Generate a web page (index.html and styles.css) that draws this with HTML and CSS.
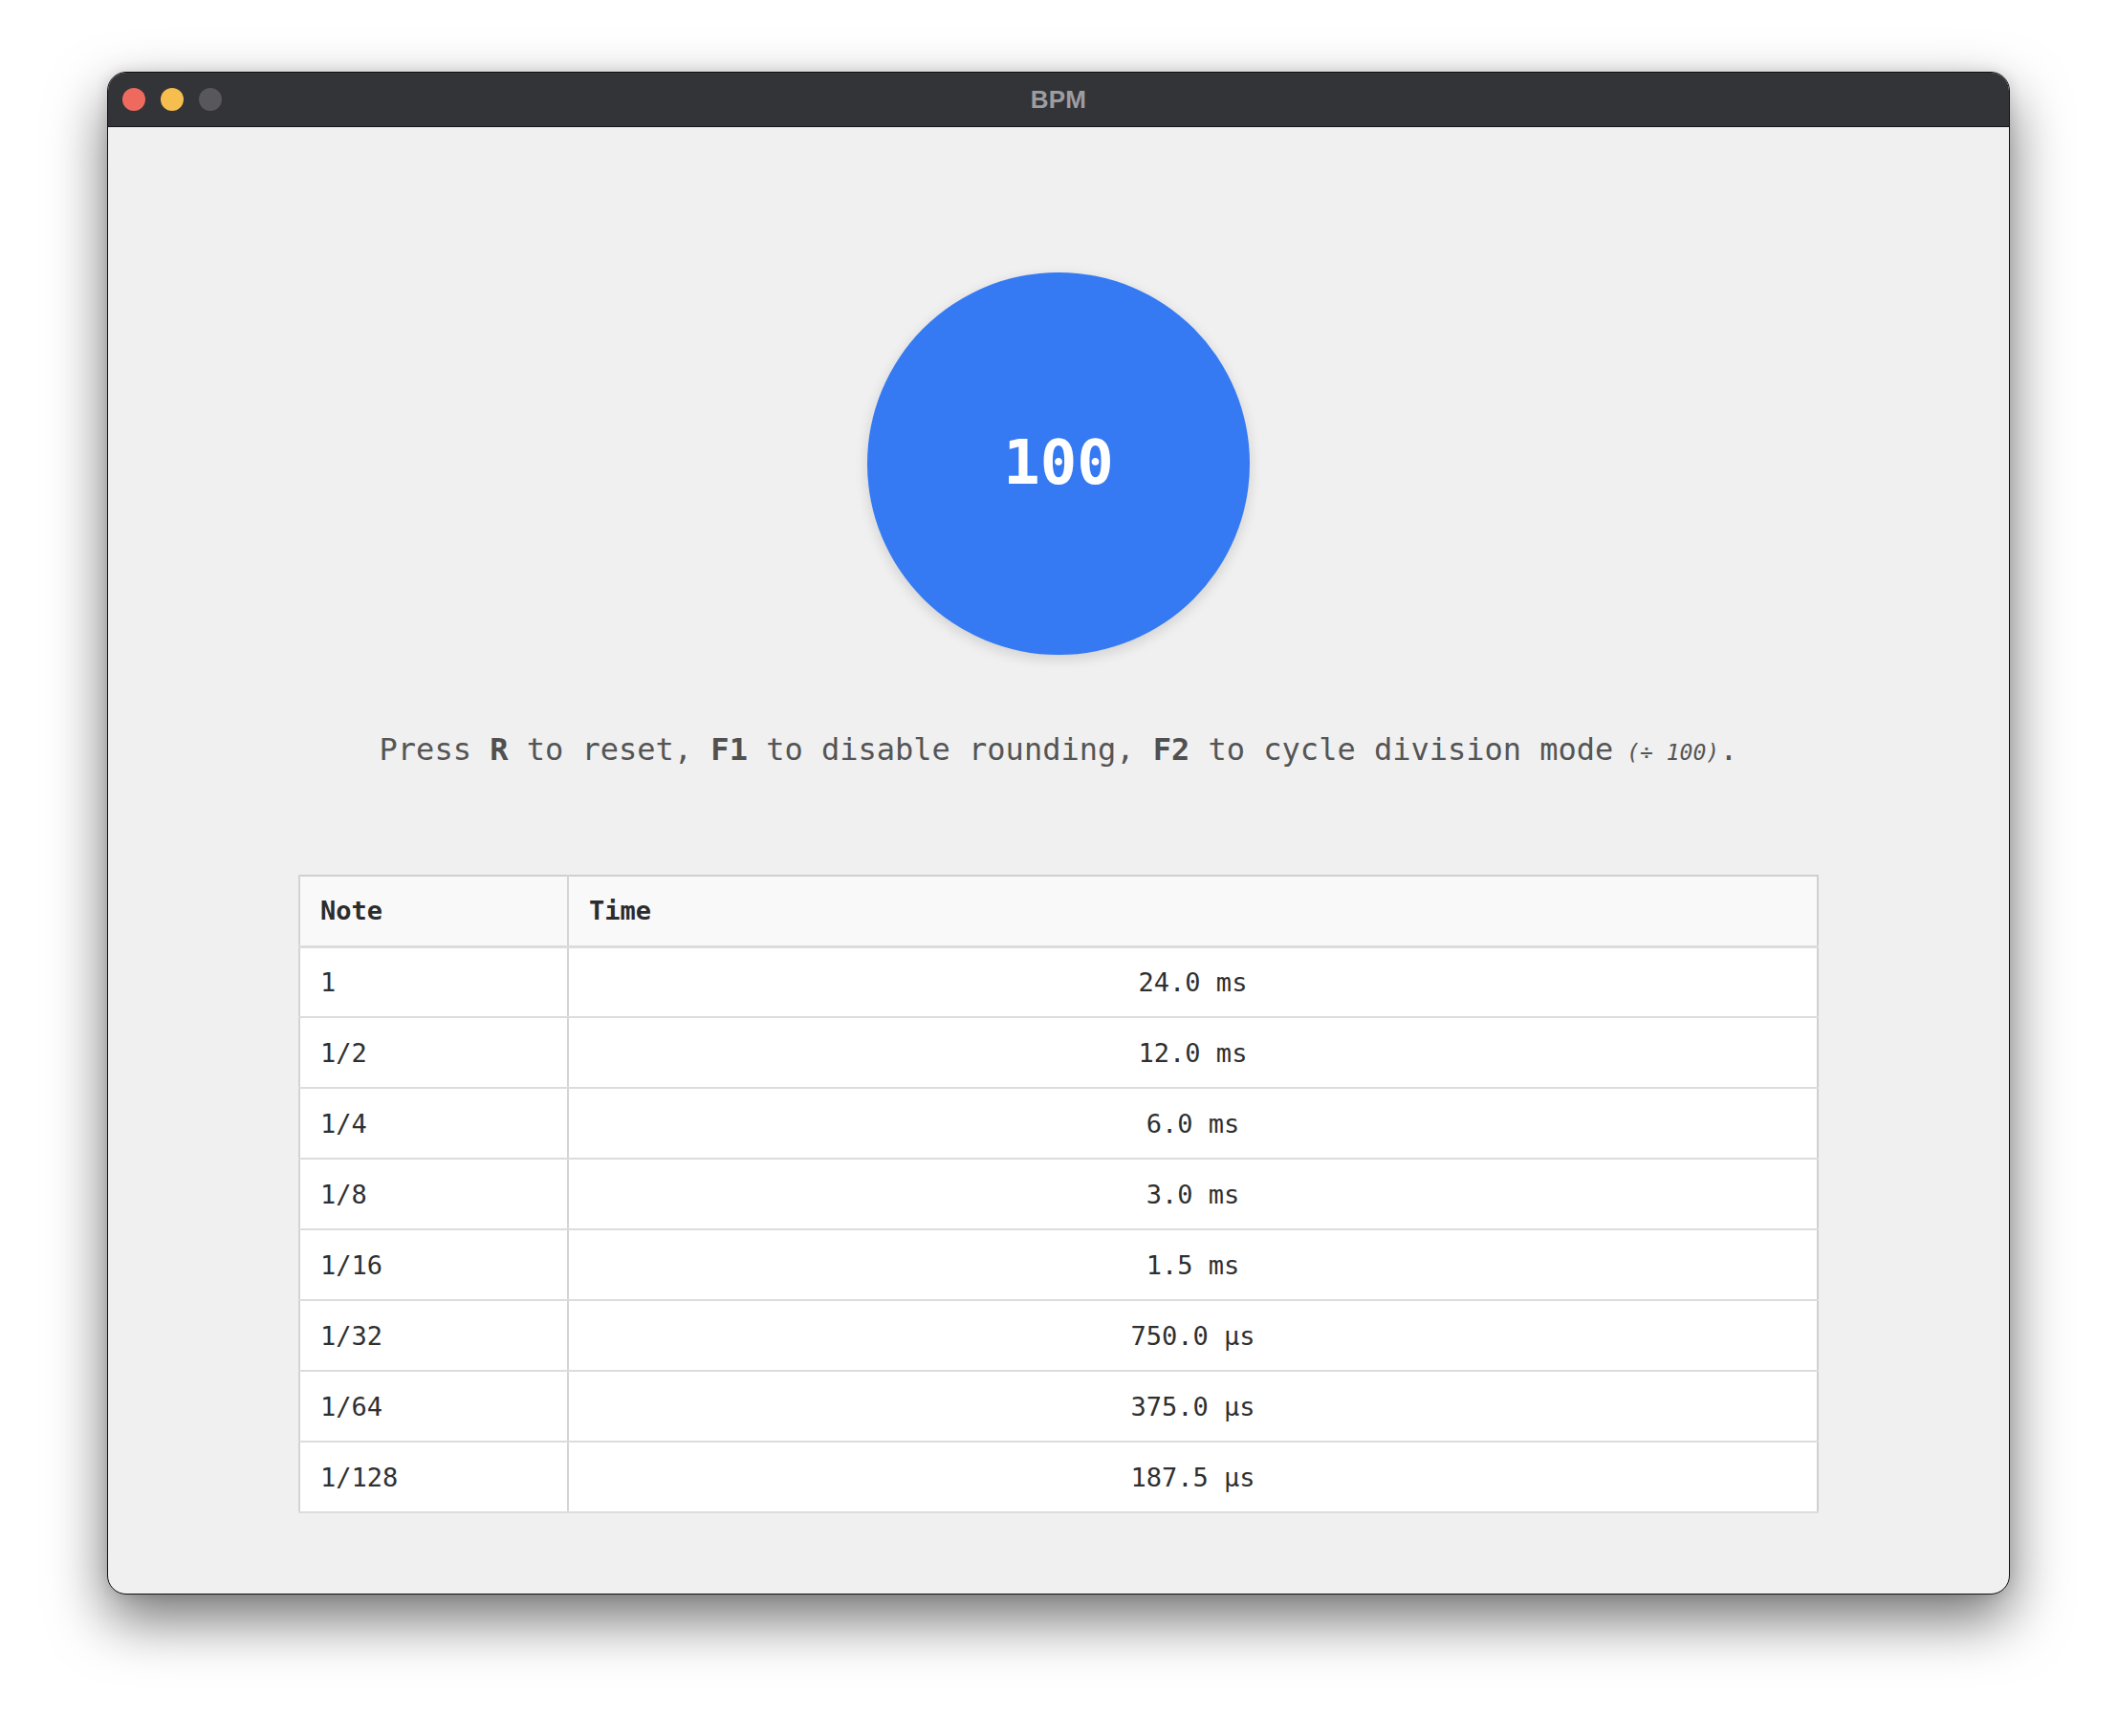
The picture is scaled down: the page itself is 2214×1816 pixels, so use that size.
FILE: index.html
```html
<!DOCTYPE html>
<html>
<head>
<meta charset="utf-8">
<title>BPM</title>
<link rel="stylesheet" href="styles.css">
</head>
<body>
<div class="window">
  <div class="titlebar">
    <div class="lights">
      <span class="light red"></span>
      <span class="light yellow"></span>
      <span class="light gray"></span>
    </div>
    <div class="title">BPM</div>
    <div class="spacer"></div>
  </div>
  <main class="content">
    <div class="circle"><span class="bpm">100</span></div>
    <p class="help">Press <b>R</b> to reset, <b>F1</b> to disable rounding, <b>F2</b> to cycle division mode<i class="mode"> (÷ 100)</i>.</p>
    <table class="notes">
      <thead>
        <tr><th class="c1">Note</th><th class="c2">Time</th></tr>
      </thead>
      <tbody>
        <tr><td class="c1">1</td><td class="c2">24.0 ms</td></tr>
        <tr><td class="c1">1/2</td><td class="c2">12.0 ms</td></tr>
        <tr><td class="c1">1/4</td><td class="c2">6.0 ms</td></tr>
        <tr><td class="c1">1/8</td><td class="c2">3.0 ms</td></tr>
        <tr><td class="c1">1/16</td><td class="c2">1.5 ms</td></tr>
        <tr><td class="c1">1/32</td><td class="c2">750.0 µs</td></tr>
        <tr><td class="c1">1/64</td><td class="c2">375.0 µs</td></tr>
        <tr><td class="c1">1/128</td><td class="c2">187.5 µs</td></tr>
      </tbody>
    </table>
  </main>
</div>
</body>
</html>
```
FILE: styles.css
```css
html, body {
  margin: 0;
  padding: 0;
  background: #ffffff;
}
body {
  min-height: 1816px;
  box-sizing: border-box;
  padding: 75px 112px 0 112px;
  font-family: "DejaVu Sans Mono", monospace;
}
.window {
  width: 1990px;
  height: 1593px;
  box-sizing: border-box;
  border: 1px solid #111;
  border-radius: 20px;
  overflow: hidden;
  background: #f0f0f0;
  box-shadow: 0 26px 60px rgba(0, 0, 0, 0.55), 0 0 14px rgba(0, 0, 0, 0.12);
  display: flex;
  flex-direction: column;
}
.titlebar {
  height: 56px;
  flex: none;
  background: #333438;
  border-bottom: 1px solid #161618;
  display: grid;
  grid-template-columns: 1fr auto 1fr;
  align-items: center;
}
.lights {
  display: flex;
  gap: 16px;
  padding-left: 15px;
}
.light {
  width: 24px;
  height: 24px;
  border-radius: 50%;
  display: block;
}
.red { background: #ee6a5f; }
.yellow { background: #f5be4f; }
.gray { background: #58585c; }
.title {
  font-family: "Liberation Sans", Arial, sans-serif;
  font-weight: bold;
  font-size: 26px;
  color: #9d9da1;
  letter-spacing: 0.3px;
}
.content {
  flex: 1;
  display: flex;
  flex-direction: column;
  align-items: center;
  padding-top: 152px;
}
.circle {
  width: 400px;
  height: 400px;
  border-radius: 50%;
  background: #3579f3;
  box-shadow: 0 4px 14px rgba(0, 0, 0, 0.14);
  display: flex;
  align-items: center;
  justify-content: center;
}
.bpm {
  color: #ffffff;
  font-weight: bold;
  font-size: 64px;
  line-height: 1;
  margin-top: -2px;
}
.help {
  margin: 75px 0 0 0;
  font-size: 32px;
  line-height: 48px;
  color: #555555;
  white-space: nowrap;
}
.help b {
  font-weight: bold;
  color: #505050;
}
.mode {
  font-size: 23px;
  font-style: italic;
  color: #555555;
}
.notes {
  margin-top: 104px;
  width: 1590px;
  border-collapse: collapse;
  border: 2px solid #d0d0d0;
  font-size: 27px;
  color: #2f2f2f;
}
.notes th, .notes td {
  height: 74px;
  padding: 0 21px;
  box-sizing: border-box;
  border-left: 2px solid #d4d4d4;
}
.notes th {
  background: #f9f9f9;
  text-align: left;
  font-weight: bold;
  height: 74px;
  border-bottom: 3px solid #dcdcdc;
  color: #2c2c2c;
}
.notes td {
  background: #ffffff;
  border-bottom: 2px solid #dcdcdc;
}
.notes .c1 {
  width: 281px;
  text-align: left;
}
.notes td.c2 {
  text-align: center;
}
```
